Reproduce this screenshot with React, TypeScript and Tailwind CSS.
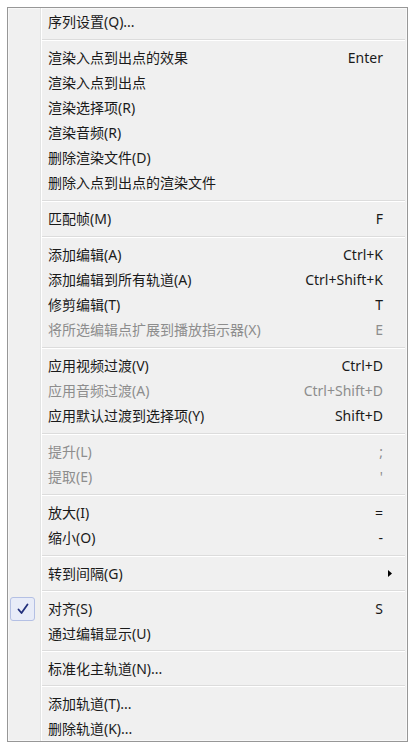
type Item = {
  label: string;
  shortcut?: string;
  disabled?: boolean;
  checked?: boolean;
  submenu?: boolean;
};

const groups: Item[][] = [
  [{ label: "序列设置(Q)..." }],
  [
    { label: "渲染入点到出点的效果", shortcut: "Enter" },
    { label: "渲染入点到出点" },
    { label: "渲染选择项(R)" },
    { label: "渲染音频(R)" },
    { label: "删除渲染文件(D)" },
    { label: "删除入点到出点的渲染文件" },
  ],
  [{ label: "匹配帧(M)", shortcut: "F" }],
  [
    { label: "添加编辑(A)", shortcut: "Ctrl+K" },
    { label: "添加编辑到所有轨道(A)", shortcut: "Ctrl+Shift+K" },
    { label: "修剪编辑(T)", shortcut: "T" },
    { label: "将所选编辑点扩展到播放指示器(X)", shortcut: "E", disabled: true },
  ],
  [
    { label: "应用视频过渡(V)", shortcut: "Ctrl+D" },
    { label: "应用音频过渡(A)", shortcut: "Ctrl+Shift+D", disabled: true },
    { label: "应用默认过渡到选择项(Y)", shortcut: "Shift+D" },
  ],
  [
    { label: "提升(L)", shortcut: ";", disabled: true },
    { label: "提取(E)", shortcut: "'", disabled: true },
  ],
  [
    { label: "放大(I)", shortcut: "=" },
    { label: "缩小(O)", shortcut: "-" },
  ],
  [{ label: "转到间隔(G)", submenu: true }],
  [
    { label: "对齐(S)", shortcut: "S", checked: true },
    { label: "通过编辑显示(U)" },
  ],
  [{ label: "标准化主轨道(N)..." }],
  [
    { label: "添加轨道(T)..." },
    { label: "删除轨道(K)..." },
  ],
];

function Gutter({ children }: { children?: React.ReactNode }) {
  return (
    <div className="w-[33px] shrink-0 flex items-center pl-[2px] border-r border-r-[#e2e3e3] shadow-[1px_0_0_#ffffff]">
      {children}
    </div>
  );
}

function Row({ item }: { item: Item }) {
  const color = item.disabled ? "text-[#8d8d8d]" : "text-[#1a1a1a]";
  return (
    <div className={`flex h-[25px] ${color}`}>
      <Gutter>
        {item.checked && (
          <div className="w-[25px] h-[24px] rounded-[3px] border border-[#b4c0e4] bg-[#e8ecf8] flex items-center justify-center">
            <svg width="12" height="12" viewBox="0 0 12 12" fill="none">
              <path d="M1.5 6.5 L4.5 10 L10.5 1.5" stroke="#22307c" strokeWidth="1.8" strokeLinecap="round" strokeLinejoin="round" />
            </svg>
          </div>
        )}
      </Gutter>
      <div className="flex-1 flex items-center justify-between pl-[7px] pr-[24px]">
        <span>{item.label}</span>
        {item.shortcut && <span>{item.shortcut}</span>}
        {item.submenu && (
          <svg className="-mr-[9px]" width="4" height="7" viewBox="0 0 4 7">
            <path d="M0 0 L4 3.5 L0 7 Z" fill="#000000" />
          </svg>
        )}
      </div>
    </div>
  );
}

// the lower separators sit a pixel tighter in the original menu
function Separator({ tight }: { tight?: boolean }) {
  return (
    <div className={`flex ${tight ? "h-[10px]" : "h-[11px]"}`}>
      <Gutter />
      <div className="flex-1 flex items-center pl-px pr-[2px]">
        <div className="w-full h-[2px] border-t border-t-[#dcdcdc] border-b border-b-white" />
      </div>
    </div>
  );
}

export default function App() {
  return (
    <div
      className="w-[414px] h-[751px] bg-white pt-[7px] pl-[7px] text-[14px] leading-none"
      style={{ fontFamily: '"Noto Sans", "Noto Sans CJK SC", sans-serif' }}
    >
      <div className="w-[401px] border border-[#979797] bg-[#f0f0f0] shadow-[inset_0_0_0_1px_#f8f8f8]">
        <div className="flex h-px">
          <Gutter />
        </div>
        {groups.map((group, gi) => (
          <div key={gi}>
            {gi > 0 && <Separator tight={gi >= 8} />}
            {group.map((item) => (
              <Row key={item.label} item={item} />
            ))}
          </div>
        ))}
      </div>
    </div>
  );
}
